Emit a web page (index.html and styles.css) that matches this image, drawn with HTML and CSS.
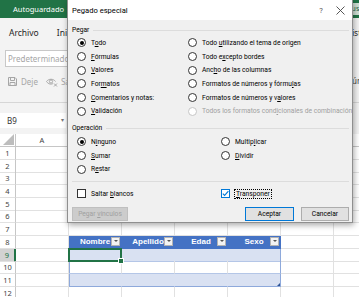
FILE: index.html
```html
<!DOCTYPE html>
<html lang="es">
<head>
  <meta charset="UTF-8">
  <title>Pegado especial</title>
  <link rel="stylesheet" href="styles.css">
</head>
<body>
  <div class="app">
    <div class="titlebar">
      <span>Autoguardado</span>
      <div class="search">Buscar</div>
    </div>
    <div class="tabs">
      <span>Archivo</span>
      <span>Inicio</span>
      <span class="far">Vista</span>
    </div>
    <div class="ribbon">
      <div class="ribbon-left">
        <div class="stylebox">Predeterminado</div>
        <div class="viewrow">
          <svg width="11" height="11" viewBox="0 0 11 11"><path d="M1.5 1.5h6.5l1.5 1.5v6.5h-8z M3.5 1.5v3h4v-3 M3 9.5v-3h5v3" fill="none" stroke="#a6a6a6"/></svg>
          <span>Deje</span>
          <svg class="eye" width="12" height="11" viewBox="0 0 12 11"><path d="M0.5 5.5c2-3 7-3 9 0M0.5 5.5c2 3 5 3 6.5 2" fill="none" stroke="#a6a6a6"/><circle cx="5" cy="5.5" r="1.6" fill="none" stroke="#a6a6a6"/><path d="M8 7.5l3 3M11 7.5l-3 3" stroke="#a6a6a6"/></svg>
          <span>Salir</span>
        </div>
      </div>
      <div class="ribbon-right">Número</div>
    </div>
    <div class="fbar">
      <div class="namebox">B9<span class="caret">▾</span></div>
    </div>
    <div class="sheet">
      <div class="row head"><div class="rh corner"><svg width="11" height="11" viewBox="0 0 11 11"><path d="M11 0V11H0z" fill="#bdbdbd"/></svg></div><div>A</div><div></div><div></div><div></div><div></div><div></div><div></div></div>
      <div class="row"><div class="rh">1</div><div></div><div></div><div></div><div></div><div></div><div></div><div></div></div>
      <div class="row"><div class="rh">2</div><div></div><div></div><div></div><div></div><div></div><div></div><div></div></div>
      <div class="row"><div class="rh">3</div><div></div><div></div><div></div><div></div><div></div><div></div><div></div></div>
      <div class="row"><div class="rh">4</div><div></div><div></div><div></div><div></div><div></div><div></div><div></div></div>
      <div class="row"><div class="rh">5</div><div></div><div></div><div></div><div></div><div></div><div></div><div></div></div>
      <div class="row"><div class="rh">6</div><div></div><div></div><div></div><div></div><div></div><div></div><div></div></div>
      <div class="row"><div class="rh">7</div><div></div><div></div><div></div><div></div><div></div><div></div><div></div></div>
      <div class="row"><div class="rh">8</div><div></div><div class="th">Nombre<i class="dd"></i></div><div class="th">Apellido<i class="dd"></i></div><div class="th">Edad<i class="dd"></i></div><div class="th">Sexo<i class="dd"></i></div><div></div><div></div></div>
      <div class="row"><div class="rh on">9</div><div></div><div class="band first sel"></div><div class="band"></div><div class="band"></div><div class="band last"></div><div></div><div></div></div>
      <div class="row"><div class="rh">10</div><div></div><div class="tb first"></div><div class="tb"></div><div class="tb"></div><div class="tb last"></div><div></div><div></div></div>
      <div class="row"><div class="rh">11</div><div></div><div class="band first end"></div><div class="band end"></div><div class="band end"></div><div class="band last end grip"></div><div></div><div></div></div>
      <div class="row"><div class="rh">12</div><div></div><div></div><div></div><div></div><div></div><div></div><div></div></div>
    </div>
  </div>

  <div class="dialog">
    <div class="dtitle">
      <span>Pegado especial</span>
      <span class="help">?</span>
      <span class="close"><svg width="9" height="9" viewBox="0 0 9 9"><path d="M0.5 0.5l8 8M8.5 0.5l-8 8" stroke="#444" stroke-width="0.9"/></svg></span>
    </div>
    <div class="dbody">
      <div class="group">Pegar</div>
      <div class="opts paste">
        <div class="opt"><i class="radio on"></i><span>T<u>o</u>do</span></div>
        <div class="opt"><i class="radio"></i><span>Todo <u>u</u>tilizando el tema de origen</span></div>
        <div class="opt"><i class="radio"></i><span><u>F</u>órmulas</span></div>
        <div class="opt"><i class="radio"></i><span>Todo e<u>x</u>cepto bordes</span></div>
        <div class="opt"><i class="radio"></i><span><u>V</u>alores</span></div>
        <div class="opt"><i class="radio"></i><span>Anc<u>h</u>o de las columnas</span></div>
        <div class="opt"><i class="radio"></i><span>For<u>m</u>atos</span></div>
        <div class="opt"><i class="radio"></i><span>Formatos de números y fórmu<u>l</u>as</span></div>
        <div class="opt"><i class="radio"></i><span><u>C</u>omentarios y notas:</span></div>
        <div class="opt"><i class="radio"></i><span>Formatos de números y v<u>a</u>lores</span></div>
        <div class="opt"><i class="radio"></i><span><u>V</u>alidación</span></div>
        <div class="opt off"><i class="radio"></i><span>Todos los formatos cond<u>i</u>cionales de combinación</span></div>
      </div>
      <div class="group">Operación</div>
      <div class="opts ops">
        <div class="opt"><i class="radio on"></i><span>N<u>i</u>nguno</span></div>
        <div class="opt"><i class="radio"></i><span>Multip<u>l</u>icar</span></div>
        <div class="opt"><i class="radio"></i><span><u>S</u>umar</span></div>
        <div class="opt"><i class="radio"></i><span><u>D</u>ividir</span></div>
        <div class="opt"><i class="radio"></i><span>R<u>e</u>star</span></div>
      </div>
      <div class="sep"></div>
      <div class="opts checks">
        <div class="opt"><i class="box"></i><span>Saltar <u>b</u>lancos</span></div>
        <div class="opt"><i class="box on"><svg width="7" height="7" viewBox="0 0 7 7"><path d="M0.8 3.6l1.8 1.8 3.8-4.2" fill="none" stroke="#0078d7" stroke-width="1.1"/></svg></i><span class="focus"><u>T</u>ransponer</span></div>
      </div>
      <div class="buttons">
        <button class="btn off">Pegar <u>v</u>ínculos</button>
        <button class="btn def">Aceptar</button>
        <button class="btn cancel">Cancelar</button>
      </div>
    </div>
  </div>
</body>
</html>
```

FILE: styles.css
```css
* {
  box-sizing: border-box;
}
html, body {
  margin: 0;
  width: 359px;
  height: 297px;
  overflow: hidden;
}
body {
  position: relative;
  font-family: "Noto Sans", "DejaVu Sans", sans-serif;
  color: #222;
  background: #fff;
}

/* excel window behind the dialog */
.titlebar {
  display: flex;
  align-items: center;
  height: 18px;
  padding-left: 13px;
  background: #217346;
  color: #fff;
  font-size: 7.5px;
}
.search {
  margin-left: auto;
  margin-right: -50px;
  width: 70px;
  height: 12px;
  padding-left: 8px;
  background: #cfe0d5;
  color: #1e5b36;
  font-size: 7px;
  line-height: 12px;
}
.tabs {
  display: flex;
  align-items: center;
  gap: 18px;
  height: 27px;
  padding: 2px 0 0 9px;
  background: #f3f3f3;
  color: #262626;
  font-size: 8.5px;
  white-space: nowrap;
}
.tabs .far {
  margin-left: auto;
  margin-right: -7px;
}
.ribbon {
  display: flex;
  height: 58px;
  padding: 5px 0 0 5px;
  background: #f3f3f3;
  border-bottom: 1px solid #d6d6d6;
}
.ribbon-right {
  margin-left: auto;
  margin-right: -18px;
  padding-top: 25px;
  color: #444;
  font-size: 8px;
  white-space: nowrap;
}
.stylebox {
  width: 90px;
  height: 17px;
  padding-left: 2px;
  background: #fff;
  border: 1px solid #c8c8c8;
  color: #a6a6a6;
  font-size: 8px;
  line-height: 15px;
}
.viewrow {
  display: flex;
  align-items: center;
  gap: 3px;
  height: 12px;
  margin-top: 8px;
  padding-left: 2px;
  color: #a6a6a6;
  font-size: 8px;
}
.viewrow .eye {
  margin-left: 5px;
}
.fbar {
  height: 31px;
  padding-top: 10px;
  background: #f3f3f3;
}
.namebox {
  display: flex;
  justify-content: space-between;
  width: 66px;
  height: 15px;
  padding-left: 7px;
  background: #fff;
  color: #333;
  font-size: 8px;
  line-height: 15px;
}
.caret {
  padding-right: 2px;
  color: #777;
  font-size: 6px;
}

/* grid */
.sheet {
  font-size: 7.5px;
  color: #444;
}
.row {
  display: grid;
  grid-template-columns: 16px repeat(7, 53px);
  height: 12.7px;
}
.row > div {
  border-right: 1px solid #e1e1e1;
  border-bottom: 1px solid #e1e1e1;
}
.row.head {
  height: 13px;
}
.row.head > div {
  text-align: center;
  line-height: 12px;
  border-bottom-color: #c6c6c6;
}
.row > .rh {
  text-align: center;
  line-height: 12px;
  border-right-color: #c6c6c6;
}
.row > .corner {
  display: flex;
  align-items: flex-end;
  justify-content: flex-end;
  padding: 0 1px 1px 0;
}
.row > .rh.on {
  background: #d2d2d2;
  color: #217346;
  border-right: 2px solid #217346;
}
.row > .th {
  position: relative;
  overflow: hidden;
  background: #4472c4;
  color: #fff;
  font-family: "Liberation Sans", Arial, sans-serif;
  font-weight: bold;
  font-size: 8px;
  line-height: 12px;
  text-align: center;
  border-color: #4472c4;
}
.dd {
  position: absolute;
  top: 1px;
  right: 1px;
  width: 9px;
  height: 9px;
  display: flex;
  align-items: center;
  justify-content: center;
  background: #f3f3f3;
  border: 1px solid #b3b3b3;
}
.dd::after {
  content: "";
  border-left: 2px solid transparent;
  border-right: 2px solid transparent;
  border-top: 2px solid #555;
}
.row > .band {
  background: #d9e1f2;
  border-right-color: #d9e1f2;
  border-bottom-color: #b4c6e7;
}
.row > .tb {
  border-bottom-color: #b4c6e7;
}
.row > .last {
  border-right-color: #8ea9db;
}
.row > .end {
  border-bottom-color: #8ea9db;
}
.first {
  box-shadow: inset 1px 0 #8ea9db;
}
.sel, .grip {
  position: relative;
}
.sel::after {
  content: "";
  position: absolute;
  left: -1px;
  top: -1px;
  right: -1px;
  bottom: -1px;
  border: 2px solid #217346;
}
.sel::before {
  content: "";
  position: absolute;
  right: -3px;
  bottom: -3px;
  width: 4px;
  height: 4px;
  background: #217346;
  border: 1px solid #fff;
  z-index: 1;
}
.grip::after {
  content: "";
  position: absolute;
  right: 0;
  bottom: 0;
  border-left: 3px solid transparent;
  border-bottom: 3px solid #2f5597;
}

/* paste special dialog */
.dialog {
  position: absolute;
  left: 67px;
  top: -1px;
  width: 286px;
  height: 224px;
  border: 1px solid #8f8f8f;
  background: #f0f0f0;
  box-shadow: 1px 2px 6px rgba(0, 0, 0, 0.35);
  color: #000;
  font-family: Roboto, "Noto Sans", sans-serif;
  font-size: 6.7px;
}
.dtitle {
  display: flex;
  align-items: center;
  height: 20px;
  padding-left: 4px;
  background: #fff;
  font-size: 7.6px;
}
.help {
  margin-left: auto;
  width: 14px;
  text-align: center;
  color: #555;
}
.close {
  display: flex;
  justify-content: center;
  width: 24px;
}
.dbody {
  padding: 0 3px 0 4px;
}
.group {
  display: flex;
  align-items: center;
  height: 12px;
  margin-top: 4px;
}
.group::after {
  content: "";
  flex: 1;
  height: 1px;
  margin-left: 4px;
  background: #dcdcdc;
}
.opts {
  display: grid;
  grid-auto-rows: 13.7px;
}
.paste {
  grid-template-columns: 111px 1fr;
}
.ops {
  grid-template-columns: 144px 1fr;
  margin-top: 1px;
}
.checks {
  grid-template-columns: 144px 1fr;
  grid-auto-rows: 13px;
  margin-top: 5px;
}
.opt {
  display: flex;
  align-items: center;
  gap: 5px;
  padding-left: 5px;
  white-space: nowrap;
}
.radio {
  display: flex;
  align-items: center;
  justify-content: center;
  width: 9px;
  height: 9px;
  border: 1px solid #333;
  border-radius: 50%;
  background: #fff;
}
.radio.on::after {
  content: "";
  width: 4px;
  height: 4px;
  border-radius: 50%;
  background: #000;
}
.opt.off {
  color: #a0a0a0;
}
.opt.off .radio {
  border-color: #c6c6c6;
}
.sep {
  height: 1px;
  margin-top: 5px;
  background: #dcdcdc;
}
.box {
  display: flex;
  align-items: center;
  justify-content: center;
  width: 9px;
  height: 9px;
  border: 1px solid #333;
  background: #fff;
}
.box.on {
  border-color: #0078d7;
}
.focus {
  outline: 1px dotted #000;
  padding: 0 1px;
}
.buttons {
  display: flex;
  gap: 7px;
  margin-top: 6.7px;
}
.btn {
  height: 14px;
  padding: 0;
  font: inherit;
  color: #000;
  background: #e1e1e1;
  border: 1px solid #adadad;
}
.btn.off {
  width: 56px;
  margin-right: auto;
  color: #a0a0a0;
  background: #cccccc;
  border-color: #bfbfbf;
}
.btn.def {
  width: 49px;
  border-color: #0078d7;
}
.btn.cancel {
  width: 48px;
}
```
